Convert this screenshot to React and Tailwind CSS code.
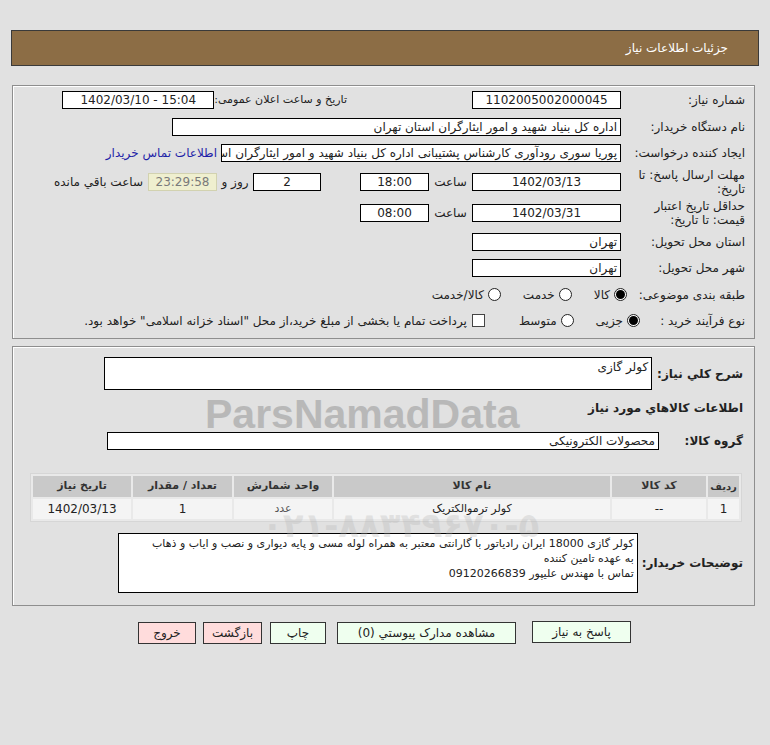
import React from "react";

const Field = ({ w, className = "", children }) => (
  <div
    className={`h-[18px] shrink-0 bg-white border border-black px-[3px] text-[12px] leading-[16px] whitespace-nowrap overflow-hidden ${w} ${className}`}
  >
    {children}
  </div>
);

const Radio = ({ on }) => (
  <span className="w-[13px] h-[13px] shrink-0 rounded-full border border-[#222] bg-white flex items-center justify-center">
    {on && <span className="w-[9px] h-[9px] rounded-full bg-black" />}
  </span>
);

const Btn = ({ w, pink, children }) => (
  <button
    className={`h-[22px] border border-[#333] text-[12px] text-[#222] ${w} ${
      pink ? "bg-[#ffdcdc]" : "bg-[#efffef]"
    }`}
  >
    {children}
  </button>
);

const App = () => {
  return (
    <div
      dir="rtl"
      className="relative w-[770px] h-[745px] bg-[#e1e1e1] overflow-hidden font-['Tahoma','DejaVu_Sans',sans-serif] text-[#222]"
    >
      {/* Header */}
      <div className="pt-[30px] px-[11px]">
        <div className="h-[36px] bg-[#8c6d45] border border-[#3a3a3a] flex items-center pr-[30px] text-white text-[12px]">
          جزئیات اطلاعات نیاز
        </div>
      </div>

      {/* Main info panel */}
      <div className="mr-[15px] w-[743px] mt-[19px] border border-[#8e8e8e] shadow-[inset_1px_1px_0_#fff] pr-[9px] pt-[1px] pb-[5px] text-[12px]">
        <div className="flex items-center h-[26px] pl-[55px]">
          <div className="w-[124px] shrink-0">شماره نیاز:</div>
          <Field w="w-[149px]" className="text-center">1102005002000045</Field>
          <div className="mr-[125px] whitespace-nowrap text-[11px]">تاریخ و ساعت اعلان عمومی:</div>
          <Field w="w-[152px] mr-auto" className="text-center">
            <span dir="ltr">1402/03/10 - 15:04</span>
          </Field>
        </div>

        <div className="flex items-center h-[27px]">
          <div className="w-[124px]">نام دستگاه خریدار:</div>
          <Field w="w-[449px]">اداره کل بنیاد شهید و امور ایثارگران استان تهران</Field>
        </div>

        <div className="flex items-center h-[26px]">
          <div className="w-[124px]">ایجاد کننده درخواست:</div>
          <Field w="w-[400px]">
            پوریا سوری رودآوری کارشناس پشتیبانی اداره کل بنیاد شهید و امور ایثارگران استان تهران
          </Field>
          <span className="mr-[4px] text-[#1f1fa8] whitespace-nowrap">اطلاعات تماس خریدار</span>
        </div>

        <div className="flex items-center h-[31px]">
          <div className="w-[124px] leading-[14px]">
            مهلت ارسال پاسخ: تا
            <br />
            تاریخ:
          </div>
          <Field w="w-[149px]" className="text-center">1402/03/13</Field>
          <div className="w-[43px] text-center">ساعت</div>
          <Field w="w-[69px]" className="text-center">18:00</Field>
          <Field w="w-[68px] mr-[39px]" className="text-center">2</Field>
          <div className="w-[36px] text-center whitespace-nowrap">روز و</div>
          <div className="h-[18px] w-[69px] bg-[#efefcf] border border-[#d2d2b0] text-center text-[12px] leading-[16px] text-[#7a7a7a]">
            23:29:58
          </div>
          <div className="mr-[5px] whitespace-nowrap">ساعت باقي مانده</div>
        </div>

        <div className="flex items-center h-[32px]">
          <div className="w-[124px] leading-[14px]">
            حداقل تاریخ اعتبار
            <br />
            قیمت: تا تاریخ:
          </div>
          <Field w="w-[149px]" className="text-center">1402/03/31</Field>
          <div className="w-[43px] text-center">ساعت</div>
          <Field w="w-[69px]" className="text-center">08:00</Field>
        </div>

        <div className="flex items-center h-[26px]">
          <div className="w-[124px]">استان محل تحویل:</div>
          <Field w="w-[149px]">تهران</Field>
        </div>

        <div className="flex items-center h-[26px]">
          <div className="w-[124px]">شهر محل تحویل:</div>
          <Field w="w-[149px]">تهران</Field>
        </div>

        <div className="flex items-center h-[27px]">
          <div className="w-[118px]">طبقه بندی موضوعی:</div>
          <div className="flex items-center gap-[4px]">
            <Radio on />
            <span>کالا</span>
          </div>
          <div className="flex items-center gap-[4px] mr-[22px]">
            <Radio />
            <span>خدمت</span>
          </div>
          <div className="flex items-center gap-[4px] mr-[22px]">
            <Radio />
            <span>کالا/خدمت</span>
          </div>
        </div>

        <div className="flex items-center h-[25px]">
          <div className="w-[105px]">نوع فرآیند خرید :</div>
          <div className="flex items-center gap-[4px]">
            <Radio on />
            <span>جزیی</span>
          </div>
          <div className="flex items-center gap-[4px] mr-[22px]">
            <Radio />
            <span>متوسط</span>
          </div>
          <div className="flex items-center gap-[5px] mr-[34px]">
            <span className="w-[13px] h-[13px] bg-white border border-[#444] shrink-0" />
            <span className="whitespace-nowrap">
              پرداخت تمام یا بخشی از مبلغ خرید،از محل "اسناد خزانه اسلامی" خواهد بود.
            </span>
          </div>
        </div>
      </div>

      {/* Items panel */}
      <div className="mr-[15px] w-[743px] mt-[7px] border border-[#8e8e8e] shadow-[inset_1px_1px_0_#fff] pt-[10px] pb-[12px] text-[12px]">
        <div className="flex items-center pr-[11px] pl-[91px]">
          <div className="font-bold text-[12px] whitespace-nowrap">شرح کلي نياز:</div>
          <div className="h-[33px] flex-1 mr-[5px] bg-white border border-black px-[3px] leading-[18px]">کولر گازی</div>
        </div>

        <div className="pr-[11px] mt-[9px] h-[18px] leading-[18px] font-bold text-[12px]">
          اطلاعات كالاهاي مورد نياز
        </div>

        <div className="flex items-center pr-[11px] pl-[94px] mt-[15px]">
          <div className="w-[84px] shrink-0 font-bold text-[12px]">گروه کالا:</div>
          <div className="h-[18px] flex-1 bg-white border border-black px-[3px] text-[12px] leading-[16px]">
            محصولات الکترونیکی
          </div>
        </div>

        <table className="mt-[23px] mr-[12px] w-[712px] border-separate border-spacing-[2px] bg-[#e9e9e9] border border-[#d6d6d6] text-center">
          <thead>
            <tr className="h-[21px] text-[11px] font-bold text-[#333]">
              <td className="w-[31px] px-0 bg-[#c9c9c9] text-[10px]">ردیف</td>
              <td className="w-[94px] bg-[#c9c9c9]">کد کالا</td>
              <td className="bg-[#c9c9c9]">نام کالا</td>
              <td className="w-[98px] bg-[#c9c9c9]">واحد شمارش</td>
              <td className="w-[99px] bg-[#c9c9c9]">تعداد / مقدار</td>
              <td className="w-[98px] bg-[#c9c9c9]">تاریخ نیاز</td>
            </tr>
          </thead>
          <tbody>
            <tr className="h-[20px] text-[12px]">
              <td className="bg-[#f4f4f4]">1</td>
              <td className="bg-[#f4f4f4]">--</td>
              <td className="bg-[#f4f4f4] text-[11px]">کولر ترموالکتریک</td>
              <td className="bg-[#f4f4f4] text-[11px] text-[#555]">عدد</td>
              <td className="bg-[#f4f4f4]">1</td>
              <td className="bg-[#f4f4f4]">1402/03/13</td>
            </tr>
          </tbody>
        </table>

        <div className="flex items-center pr-[11px] pl-[105px] mt-[11px]">
          <div className="font-bold text-[12px] whitespace-nowrap">توضیحات خریدار:</div>
          <div className="h-[60px] flex-1 mr-[4px] bg-white border border-black px-[3px] pt-[2px] leading-[15px] text-[11px]">
            <div className="whitespace-nowrap">
              کولر گازی 18000 ایران رادیاتور با گارانتی معتبر به همراه لوله مسی و پایه دیواری و نصب و ایاب و ذهاب
            </div>
            <div>به عهده تامین کننده</div>
            <div>تماس با مهندس علیپور 09120266839</div>
          </div>
        </div>
      </div>

      {/* Buttons */}
      <div className="flex items-center pr-[139px] mt-[14px]">
        <Btn w="w-[99px]">پاسخ به نیاز</Btn>
        <div className="mr-[16px]">
          <Btn w="w-[179px]">مشاهده مدارک پیوستي (0)</Btn>
        </div>
        <div className="mr-[11px]">
          <Btn w="w-[56px]">چاپ</Btn>
        </div>
        <div className="mr-[8px]">
          <Btn w="w-[59px]" pink>
            بازگشت
          </Btn>
        </div>
        <div className="mr-[7px]">
          <Btn w="w-[58px]" pink>
            خروج
          </Btn>
        </div>
      </div>

      {/* Watermark overlay */}
      <div
        dir="ltr"
        className="absolute pointer-events-none left-[205px] top-[384px] text-[41px] font-bold text-[#9e9e9e] opacity-60 font-['Liberation_Sans',sans-serif]"
      >
        ParsNamadData
      </div>
      <div
        dir="ltr"
        className="absolute pointer-events-none left-[262px] top-[500px] text-[34px] font-bold text-[#b4b4b4] opacity-30 whitespace-nowrap"
      >
        ۰۲۱-۸۸۳۴۹۶۷۰-۵
      </div>
    </div>
  );
};

export default App;
